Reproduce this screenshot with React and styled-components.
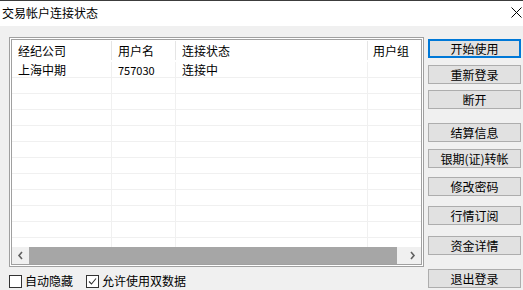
import styled, { createGlobalStyle } from 'styled-components';

const GlobalStyle = createGlobalStyle`
  html, body {
    margin: 0;
    padding: 0;
    background: #f0f0f0;
  }
  body {
    font-family: "Noto Sans CJK SC", "Liberation Sans", sans-serif;
    font-size: 12px;
    color: #000;
  }
`;

const Window = styled.div`
  width: 523px;
  height: 290px;
  display: flex;
  flex-direction: column;
  background: #f0f0f0;
  overflow: hidden;
`;

const TitleBar = styled.div`
  height: 26px;
  box-sizing: border-box;
  border-top: 1px solid #3c3c3c;
  background: #fff;
  display: flex;
  align-items: center;
  justify-content: space-between;
  padding: 0 1px 2px 2px;
  line-height: 14px;
`;

const Body = styled.div`
  flex: 1;
  display: flex;
  padding-left: 9px;
  gap: 4px;
`;

const LeftCol = styled.div`
  display: flex;
  flex-direction: column;
  padding-top: 11px;
  gap: 7px;
`;

const ListFrame = styled.div`
  width: 415px;
  height: 230px;
  box-sizing: border-box;
  border: 1px solid #a0a0a0;
  background: #fff;
  padding: 1px;
`;

const ListInner = styled.div`
  height: 100%;
  box-sizing: border-box;
  border: 1px solid #a0a0a0;
  display: flex;
  flex-direction: column;
  overflow: hidden;
`;

const cols = '100px 64px 192px 1fr';

const HeaderRow = styled.div`
  height: 22px;
  display: grid;
  grid-template-columns: ${cols};
  flex: none;
`;

const HeaderCell = styled.div`
  display: flex;
  align-items: center;
  padding-left: ${(p) => p.$pad || 6}px;
  border-right: ${(p) => (p.$last ? 'none' : '1px solid #e5e5e5')};
  margin: 1px 0 2px;
  line-height: 14px;
`;

const Rows = styled.div`
  flex: 1;
  overflow: hidden;
`;

const Row = styled.div`
  height: 16px;
  box-sizing: border-box;
  display: grid;
  grid-template-columns: ${cols};
  border-bottom: 1px solid #f0f0f0;
`;

const Cell = styled.div`
  display: flex;
  align-items: center;
  padding-left: ${(p) => p.$pad || 6}px;
  border-right: ${(p) => (p.$last ? 'none' : '1px solid #f0f0f0')};
  font-size: ${(p) => (p.$num ? '11px' : '12px')};
  line-height: 14px;
  white-space: nowrap;
`;

const HScroll = styled.div`
  height: 17px;
  flex: none;
  display: flex;
  background: #f0f0f0;
`;

const ArrowBtn = styled.div`
  width: 17px;
  display: flex;
  align-items: center;
  justify-content: center;
`;

const Track = styled.div`
  flex: 1;
  display: flex;
  padding-right: 7px;
`;

const Thumb = styled.div`
  flex: 1;
  background: #a6a6a6;
`;

const CheckRow = styled.div`
  display: flex;
  align-items: center;
  gap: 13px;
`;

const CheckLabel = styled.label`
  display: flex;
  align-items: center;
  gap: 3px;
  line-height: 14px;
`;

const Box = styled.span`
  width: 13px;
  height: 13px;
  box-sizing: border-box;
  border: 1px solid #333;
  background: #fff;
  display: flex;
  align-items: center;
  justify-content: center;
`;

const RightCol = styled.div`
  display: flex;
  flex-direction: column;
  padding-top: 13px;
`;

const Button = styled.div`
  width: 93px;
  height: 19px;
  box-sizing: border-box;
  margin-top: ${(p) => p.$mt || 0}px;
  background: #e1e1e1;
  border: ${(p) => (p.$focus ? '2px solid #0078d7' : '1px solid #adadad')};
  display: flex;
  align-items: center;
  justify-content: center;
  line-height: 14px;
`;

const buttons = [
  { label: '开始使用', mt: 0, focus: true },
  { label: '重新登录', mt: 7 },
  { label: '断开', mt: 6 },
  { label: '结算信息', mt: 14 },
  { label: '银期(证)转帐', mt: 7 },
  { label: '修改密码', mt: 9 },
  { label: '行情订阅', mt: 10 },
  { label: '资金详情', mt: 11 },
  { label: '退出登录', mt: 14 },
];

const Chevron = ({ dir }) => (
  <svg width="7" height="9" viewBox="0 0 7 9">
    <polyline
      points={dir === 'left' ? '5,1 2,4.5 5,8' : '2,1 5,4.5 2,8'}
      fill="none"
      stroke="#606060"
      strokeWidth="1.6"
    />
  </svg>
);

export default function App() {
  const empty = Array.from({ length: 11 });
  return (
    <>
      <GlobalStyle />
      <Window>
        <TitleBar>
          <span>交易帐户连接状态</span>
          <svg width="11" height="11" viewBox="0 0 11 11">
            <path d="M0.5 0.5 L10.5 10.5 M10.5 0.5 L0.5 10.5" stroke="#000" strokeWidth="1" />
          </svg>
        </TitleBar>
        <Body>
          <LeftCol>
            <ListFrame>
              <ListInner>
                <HeaderRow>
                  <HeaderCell>经纪公司</HeaderCell>
                  <HeaderCell>用户名</HeaderCell>
                  <HeaderCell>连接状态</HeaderCell>
                  <HeaderCell $pad={5} $last>用户组</HeaderCell>
                </HeaderRow>
                <Rows>
                  <Row>
                    <Cell>上海中期</Cell>
                    <Cell $num>757030</Cell>
                    <Cell>连接中</Cell>
                    <Cell $pad={5} $last />
                  </Row>
                  {empty.map((_, i) => (
                    <Row key={i}>
                      <Cell />
                      <Cell />
                      <Cell />
                      <Cell $last />
                    </Row>
                  ))}
                </Rows>
                <HScroll>
                  <ArrowBtn>
                    <Chevron dir="left" />
                  </ArrowBtn>
                  <Track>
                    <Thumb />
                  </Track>
                  <ArrowBtn>
                    <Chevron dir="right" />
                  </ArrowBtn>
                </HScroll>
              </ListInner>
            </ListFrame>
            <CheckRow>
              <CheckLabel>
                <Box />
                自动隐藏
              </CheckLabel>
              <CheckLabel>
                <Box>
                  <svg width="9" height="9" viewBox="0 0 9 9">
                    <polyline points="1,4.5 3.5,7 8,1.5" fill="none" stroke="#333" strokeWidth="1.1" />
                  </svg>
                </Box>
                允许使用双数据
              </CheckLabel>
            </CheckRow>
          </LeftCol>
          <RightCol>
            {buttons.map((b) => (
              <Button key={b.label} $mt={b.mt} $focus={b.focus}>
                {b.label}
              </Button>
            ))}
          </RightCol>
        </Body>
      </Window>
    </>
  );
}
